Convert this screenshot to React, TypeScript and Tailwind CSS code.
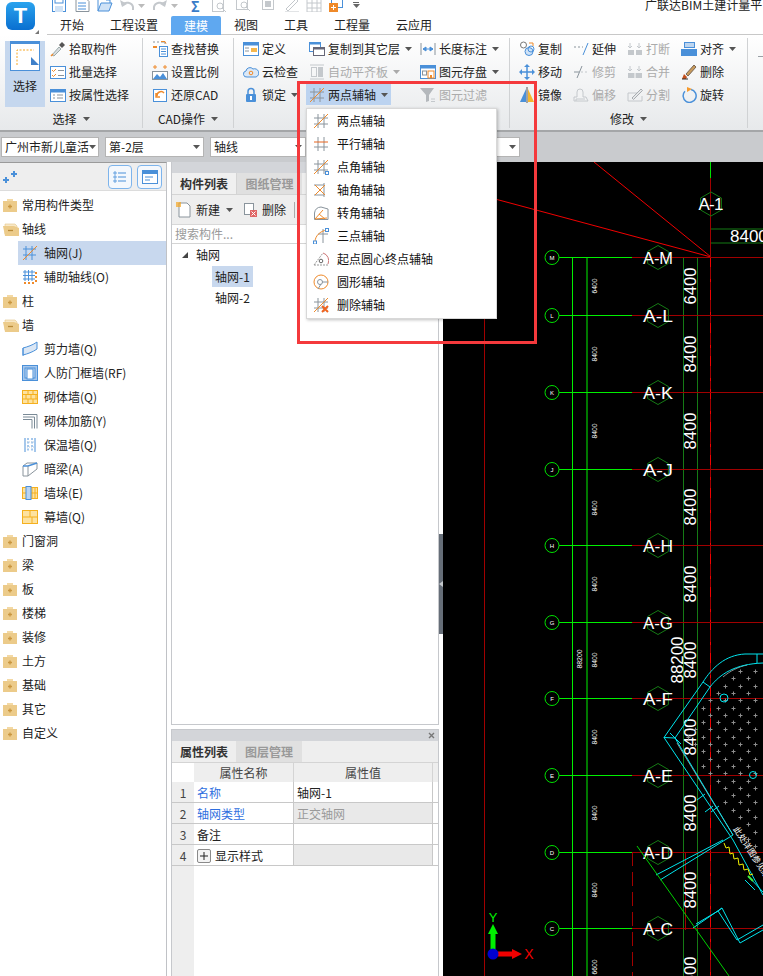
import React from "react";

type P = { children?: React.ReactNode; w?: number; h?: number };
const S = ({ children, w = 16, h = 16 }: P) => (
  <svg width={w} height={h} viewBox="0 0 16 16" fill="none" className="shrink-0">
    {children}
  </svg>
);
const B = "#4a90d9";
const O = "#ef8a2a";
const G = "#8a949c";
const L = "#c4c8cc";

const Caret = ({ c = "#555" }: { c?: string }) => (
  <svg width="7" height="4" viewBox="0 0 7 4" className="shrink-0">
    <path d="M0 0h7L3.500 4z" fill={c} />
  </svg>
);

/* ---------- axis glyphs ---------- */
const Grid = ({ d = true }: { d?: boolean }) => (
  <>
    <path d="M5 1v14M11 1v14M1 5h14M1 11h14" stroke={G} />
    {d && <path d="M1 15L15 1" stroke={O} />}
  </>
);
const MTwo = () => <S><Grid /></S>;
const MPar = () => (
  <S>
    <path d="M5 1v14M11 1v14M1 11h14" stroke={G} />
    <path d="M1 6h14" stroke="#e8641e" />
  </S>
);
const MPtAng = () => (
  <S>
    <Grid />
    <rect x="12.500" y="12.500" width="3" height="3" fill="#fff" stroke={B} />
  </S>
);
const MAxAng = () => (
  <S>
    <path d="M11 1v14M1 3h10M1 13h10" stroke={G} />
    <path d="M2 3l10 10M2 13L12 3" stroke={O} />
  </S>
);
const MTurn = () => (
  <S>
    <path d="M1.500 14.500V8A7 7 0 0 1 8 2l7 2v10.500z" stroke={G} />
    <path d="M2 14L10 5M2 14l12-1M6 9l6 5" stroke={O} />
  </S>
);
const MThree = () => (
  <S>
    <path d="M10 1v14M5 6h10" stroke={G} />
    <path d="M2 14C2 8 7 3 14 2" stroke={O} />
    <rect x="0.500" y="13" width="3" height="3" fill="#fff" stroke={B} />
    <rect x="12.500" y="0.500" width="3" height="3" fill="#fff" stroke={B} />
  </S>
);
const MArc = () => (
  <S>
    <path d="M1 14L10 2" stroke="#999" strokeDasharray="2 1" />
    <path d="M1 14h14" stroke="#999" strokeDasharray="2 1" />
    <path d="M10 2a8 8 0 0 1 5 11" stroke="#c77" />
    <circle cx="8" cy="10" r="1.800" stroke="#666" />
  </S>
);
const MCircle = () => (
  <S>
    <circle cx="8" cy="8" r="7" stroke={O} />
    <circle cx="7" cy="8" r="2.500" stroke={G} />
    <path d="M9 8h6M8 10l-3 5" stroke={G} />
  </S>
);
const MDel = () => (
  <S>
    <Grid />
    <path d="M9 9l6 6M15 9l-6 6" stroke="#f0641e" strokeWidth="2" />
  </S>
);

/* ---------- ribbon icons ---------- */
const IPick = () => (
  <S>
    <path d="M2 14L9 6l2 2-7 7z" fill="#d9dde0" stroke="#9aa" />
    <path d="M9 4l3-3 3 3-3 3z" fill="#555" />
    <path d="M1 15l2-2" stroke={O} strokeWidth="1.500" />
  </S>
);
const IBatch = () => (
  <S>
    <rect x="0.500" y="2.500" width="15" height="12" fill="#fff" stroke={B} />
    <path d="M2 6l1.500 1.500L6 5M2 11l1.500 1.500L6 10" stroke={O} />
    <path d="M8 6.500h6M8 11.500h6" stroke={G} />
  </S>
);
const IAttr = () => (
  <S>
    <rect x="0.500" y="2.500" width="15" height="12" fill="#fff" stroke={B} />
    <rect x="0.500" y="2.500" width="15" height="3" fill={B} />
    <path d="M3 8h2M7 8h6M3 11h2M7 11h6" stroke={G} />
  </S>
);
const IFind = () => (
  <S>
    <path d="M1 1h2M5 1h2M9 1h4v2" stroke={G} />
    <path d="M9 .5h4l1 2" stroke={O} />
    <rect x="1" y="5" width="4" height="2" fill={O} />
    <rect x="7.500" y="5.500" width="8" height="10" fill="#fff" stroke={B} />
    <path d="M9 8h5M9 10.500h5M9 13h5" stroke={B} />
  </S>
);
const IScale = () => (
  <S>
    <path d="M1 3h4M3 1v4M11 3h4M13 1v4" stroke={O} />
    <rect x="0.500" y="7.500" width="15" height="8" fill="#fff" stroke={G} />
    <path d="M1 15l4-5 3 3 3-4 4 6z" fill={B} />
  </S>
);
const IRestore = () => (
  <S>
    <rect x="1.500" y="2.500" width="13" height="12" fill="#fff" stroke={B} />
    <path d="M5 9a4 4 0 0 1 7-3M4 6v4h4" stroke={O} strokeWidth="1.500" />
  </S>
);
const IDefine = () => (
  <S>
    <rect x="0.500" y="1.500" width="15" height="13" fill="#fff" stroke={B} />
    <rect x="0.500" y="1.500" width="15" height="3" fill={B} />
    <path d="M2 7h4M2 10h4" stroke={G} />
    <rect x="8" y="7" width="6" height="4" fill="#f5b74e" />
  </S>
);
const ICloud = () => (
  <S>
    <path d="M4 13a3 3 0 0 1-1-6 4 4 0 0 1 7-2 3.500 3.500 0 0 1 3 8z" fill="#dbe8f6" stroke={B} />
    <circle cx="8" cy="9" r="1.800" stroke={O} />
  </S>
);
const ILock = () => (
  <S>
    <path d="M5 7V4.500a3 3 0 0 1 6 0V7" stroke={B} strokeWidth="1.500" />
    <rect x="3" y="7" width="10" height="8" rx="1" fill={B} />
    <rect x="7" y="9" width="2" height="4" fill="#fff" />
  </S>
);
const ICopyLayer = () => (
  <S>
    <rect x="0.500" y="1.500" width="11" height="9" fill="#fff" stroke={B} />
    <rect x="0.500" y="1.500" width="11" height="2" fill={B} />
    <rect x="4.500" y="6.500" width="11" height="8" fill="#fff" stroke="#667" />
    <rect x="4.500" y="6.500" width="11" height="2" fill="#667" />
  </S>
);
const IAuto = () => (
  <S>
    <path d="M1 1h14M1 15h14" stroke={L} />
    <rect x="2.500" y="3.500" width="5" height="9" stroke={L} />
    <rect x="9" y="3" width="5" height="10" fill={L} />
  </S>
);
const ILength = () => (
  <S>
    <path d="M1 2v12M15 2v12" stroke={G} />
    <path d="M3 8h10M3 8l3-2v4zM13 8l-3-2v4z" stroke={B} fill={B} />
  </S>
);
const IStore = () => (
  <S>
    <rect x="0.500" y="1.500" width="15" height="13" fill="#fff" stroke={B} />
    <rect x="0.500" y="1.500" width="15" height="3" fill={B} />
    <rect x="2.500" y="7" width="4" height="4" stroke={G} />
    <rect x="8" y="7" width="6" height="7" fill="#fff" stroke={O} />
    <rect x="10" y="11" width="2" height="3" fill={O} />
  </S>
);
const IFilter = () => (
  <S>
    <path d="M0 1h14L9 8v6l-3 1V8z" fill="#b4b8bc" />
    <path d="M11 12h4M11 14.500h4" stroke={L} />
  </S>
);
const ICopy = () => (
  <S>
    <circle cx="4.500" cy="4" r="3" fill="#fff" stroke="#777" />
    <circle cx="10" cy="10.500" r="4" fill="#cfe2f6" stroke={B} />
    <circle cx="12" cy="8" r="3" fill="none" stroke={B} />
    <path d="M10 2h4v3" stroke={O} />
  </S>
);
const IMove = () => (
  <S>
    <path d="M8 1v14M1 8h14" stroke={B} strokeWidth="1.500" />
    <path d="M8 0l3 3H5zM8 16l3-3H5zM0 8l3-3v6zM16 8l-3-3v6z" fill={B} />
  </S>
);
const IMirror = () => (
  <S>
    <path d="M7 2v13H1z" fill={B} />
    <path d="M9 2v13h6z" fill="#f5b52e" />
    <path d="M8 0v16" stroke="#555" />
  </S>
);
const IExtend = () => (
  <S>
    <path d="M1 6h9" stroke={G} strokeDasharray="2 2" />
    <path d="M15 2L10 14" stroke={B} />
  </S>
);
const ITrim = () => (
  <S>
    <path d="M8 8h7" stroke={L} strokeDasharray="2 2" />
    <path d="M1 8h5" stroke={G} />
    <path d="M9 2L4 14" stroke={G} />
  </S>
);
const IOffset = () => (
  <S>
    <path d="M1 14V10h3V5a3 3 0 0 1 6 0v5h3l2 4z" fill="#f2f3f4" stroke={L} />
    <path d="M3 14v-2h9" stroke={L} />
  </S>
);
const IBreak = () => (
  <S>
    <rect x="1" y="9" width="6" height="5" fill={L} />
    <rect x="9" y="9" width="6" height="5" fill={L} />
    <path d="M3 2v5M1 5l2 2 2-2M12 2v5M10 5l2 2 2-2" stroke={L} />
  </S>
);
const IMerge = () => (
  <S>
    <rect x="1" y="9" width="14" height="5" fill={L} />
    <path d="M8 9v5" stroke="#fff" />
    <path d="M3 2v5M1 5l2 2 2-2M12 2v5M10 5l2 2 2-2" stroke={L} />
  </S>
);
const ISplit = () => (
  <S>
    <path d="M1 14V6h9M1 14h14V9" stroke={L} />
    <path d="M5 11L14 2l1.500 1.500-9 9z" fill="#e5e7e9" stroke="#a8acb0" />
  </S>
);
const IAlign = () => (
  <S>
    <rect x="3.500" y="1.500" width="10" height="5" fill="#bcd5f0" stroke={B} />
    <rect x="0" y="8" width="16" height="7" fill={B} />
  </S>
);
const IDelete = () => (
  <S>
    <path d="M5 10l8-9 2 2-8 9z" fill="#c99a5a" stroke="#765" />
    <path d="M3 10l3 3-1 2H1z" fill="#c4501c" />
    <path d="M1 15h6" stroke="#333" />
  </S>
);
const IRotate = () => (
  <S>
    <path d="M10 2.500a6.500 6.500 0 1 1-6 1.800" stroke={B} strokeWidth="1.500" />
    <path d="M6 0l5 2-5 3z" fill="#f59a2e" />
  </S>
);

/* ---------- ribbon ---------- */
type Item = { i: React.ReactNode; t: string; a?: boolean; off?: boolean; hi?: boolean };

const RItem = ({ i, t, a, off, hi }: Item) => (
  <div
    className={
      hi
        ? "h-[21px] my-px -mx-[3px] pl-[3px] flex items-center bg-[#bcd3f0] w-[85px]"
        : "h-[23px] flex items-center"
    }
  >
    {i}
    <span className={off ? "ml-[3px] text-[#ababab] whitespace-nowrap" : "ml-[3px] text-[#222] whitespace-nowrap"}>{t}</span>
    {a && (
      <span className={hi ? "ml-[5px]" : "ml-[5px]"}>
        <Caret c={off ? "#aaa" : "#555"} />
      </span>
    )}
  </div>
);
const Col = ({ w, items }: { w: string; items: Item[] }) => (
  <div className={w + " -mt-px flex flex-col"}>
    {items.map((x) => (
      <RItem key={x.t} {...x} />
    ))}
  </div>
);
const GLabel = ({ t }: { t: string }) => (
  <div className="h-[21px] pt-[3px] flex items-center justify-center gap-[6px] text-[#222]">
    <span>{t}</span>
    <Caret />
  </div>
);

const QA = () => (
  <div className="flex items-start h-[12px] overflow-hidden relative">
    <span className="ml-[52px] -mt-[3px] flex"><S><rect x="0.500" y="0.500" width="13" height="14" stroke={B} fill="#fff" /><rect x="3" y="1" width="8" height="5" stroke={B} /><rect x="3" y="9" width="8" height="6" fill="#cfe2f6" /></S></span>
    <span className="ml-[7px] -mt-[3px] flex"><S><path d="M1 .5h9l4 4v10H1z" fill="#fff" stroke={G} /><path d="M3 6h8M3 9h8M3 12h8" stroke={B} /></S></span>
    <span className="ml-[6px] -mt-[3px] flex"><S><path d="M1 14V1h6l2 2h4v3" stroke={B} /><path d="M1 14L4 6h11l-3 8z" fill="#cfe2f6" stroke={B} /></S></span>
    <span className="ml-[6px] -mt-[3px] flex"><S><path d="M3 8a6 5 0 0 1 11 2v3" stroke={L} strokeWidth="2" /><path d="M1 3l2 7 5-3z" fill={L} /></S></span>
    <span className="ml-[3px] mt-[4px] flex"><Caret c="#bbb" /></span>
    <span className="ml-[7px] -mt-[3px] flex"><S><path d="M13 8A6 5 0 0 0 2 10v3" stroke={L} strokeWidth="2" /><path d="M15 3l-2 7-5-3z" fill={L} /></S></span>
    <span className="ml-[3px] mt-[4px] flex"><Caret c="#bbb" /></span>
    <span className="ml-[13px] -mt-[1px] text-[14px] leading-none font-bold text-[#3a7cc8]">Σ</span>
    <span className="ml-[11px] -mt-[3px] flex"><S><rect x="1.500" y="0.500" width="11" height="14" stroke={L} /><circle cx="9" cy="9" r="3" stroke={L} /><path d="M11 11l4 4" stroke={L} /></S></span>
    <span className="ml-[9px] -mt-[3px] flex"><S><rect x="0.500" y="0.500" width="11" height="12" stroke={L} /><circle cx="8" cy="8" r="3" stroke={L} /><path d="M10 10l4 4" stroke={L} /></S></span>
    <span className="ml-[8px] -mt-[3px] flex"><S><rect x="2.500" y="0.500" width="11" height="12" stroke={L} /><rect x="5" y="4" width="6" height="6" fill={L} /></S></span>
    <span className="ml-[8px] -mt-[3px] flex"><S><path d="M2 12L12 2l2 2L4 14z" stroke={L} /><path d="M1 15h14" stroke={L} /></S></span>
    <span className="ml-[6px] -mt-[3px] flex"><S><path d="M1 1v14h14V1zM6 1v14M11 1v14M1 6h14M1 11h14" stroke={L} /></S></span>
    <span className="ml-[7px] -mt-[3px] flex"><S><rect x="2.500" y="0.500" width="11" height="10" stroke={B} /><rect x="0" y="6" width="9" height="9" fill={O} /><path d="M2 10.500h5M4.500 8v5" stroke="#fff" /></S></span>
    <span className="ml-[8px] mt-[2px] flex flex-col items-center gap-px"><span className="block w-[6px] h-px bg-[#666]" /><Caret c="#666" /></span>
    <span className="absolute left-[645px] -top-[3px] text-[#222] whitespace-nowrap leading-[15px]">广联达BIM土建计量平台</span>
  </div>
);

const Combo = ({ w, t, text = "text-[#222]" }: { w: string; t?: string; text?: string }) => (
  <div className={w + " h-[20px] bg-white border border-[#b4b4b4] flex items-center justify-between pl-[3px] pr-[3px] " + text}>
    <span className="whitespace-nowrap">{t}</span>
    <Caret />
  </div>
);

/* ---------- tree ---------- */
const FolderC = () => (
  <svg width="14" height="13" viewBox="0 0 14 13" className="shrink-0">
    <path d="M4 0h6v2H4z" fill="#f3d9a5" />
    <rect x="0" y="2" width="14" height="11" fill="#eccb8a" />
    <path d="M5 7.500h4M7 5.500v4" stroke="#c9963f" strokeWidth="1.300" />
  </svg>
);
const FolderO = () => (
  <svg width="16" height="13" viewBox="0 0 16 13" className="shrink-0">
    <path d="M2 1h10l2 2v8H2z" fill="#f8e8c6" stroke="#e3c587" strokeWidth="0.600" />
    <path d="M0 3h11l5 2v8H2z" fill="#eccb8a" />
    <path d="M5 7.500h5" stroke="#b98a37" strokeWidth="1.300" />
  </svg>
);

const TAxis = () => (
  <S>
    <path d="M4 1v14M10 1v14M1 4h13M1 10h13" stroke={B} />
    <path d="M1 15L15 1" stroke={O} />
  </S>
);
const TAux = () => (
  <S>
    <path d="M3 1v11M6.500 1v11M10 1v11M1 3h12M1 6.500h12M1 10h12" stroke={B} />
    <path d="M13 4h2M13 8h2M13 12h2M2 14h2M6 14h2M10 14h2" stroke={O} strokeWidth="2" strokeDasharray="2 1" />
  </S>
);
const TShear = () => (
  <S>
    <path d="M1 7c4-1 10-3 14-6v7C11 11 5 13 1 14z" fill="#dbe7f5" stroke={B} />
    <path d="M1 7v8" stroke={B} />
  </S>
);
const TDoor = () => (
  <S>
    <rect x="0.500" y="0.500" width="15" height="15" fill="#a8c8ec" stroke={B} />
    <rect x="3" y="3" width="10" height="10" fill="#cfe0f4" stroke={B} />
    <rect x="5" y="4" width="6" height="10" fill="#fff" stroke={B} />
  </S>
);
const TBrick = () => (
  <S>
    <rect x="0.500" y="1.500" width="15" height="13" fill="#fde2a0" stroke="#f5b01e" />
    <path d="M1 5.500h14M1 10h14M6 2v3.500M11 2v3.500M4 5.500V10M9 5.500V10M14 5.500V10M6 10v4M11 10v4" stroke="#f5b01e" />
  </S>
);
const TRebar = () => (
  <S>
    <path d="M1 1.500h14v14M1 4h11.500v11.500M1 6.500h9v9" stroke="#7a8a96" />
  </S>
);
const TInsul = () => (
  <S>
    <path d="M3 1v14M13 1v14" stroke={B} />
    <path d="M6 1v14M10 1v14" stroke={B} strokeDasharray="2 1.500" />
    <path d="M3 5h10M3 10h10" stroke="#bcd" strokeDasharray="1 1" />
  </S>
);
const TBeam = () => (
  <S>
    <path d="M1 5l4-3h10v6l-9 7H1z" fill="#fff" stroke={G} />
    <path d="M1 5h5l9-3" stroke={B} strokeWidth="1.500" />
    <path d="M6 5v10" stroke={G} />
  </S>
);
const TPier = () => (
  <S>
    <rect x="0.500" y="2.500" width="15" height="11" fill="#fde2a0" stroke="#f5b01e" />
    <path d="M1 8h14M10 3v10M13 3v10" stroke="#f5b01e" />
    <rect x="4" y="1.500" width="5" height="13" fill="#b9d4f2" stroke={B} />
  </S>
);
const TCurtain = () => (
  <S>
    <rect x="0.500" y="1.500" width="15" height="13" fill="#fde2a0" stroke="#f5b01e" />
    <path d="M8 2v6M1 8h14M10 8v6" stroke="#f5b01e" />
  </S>
);

type TR = { t: string; k: "c" | "o" | "i"; i?: React.ReactNode; sel?: boolean };
const tree: TR[] = [
  { t: "常用构件类型", k: "c" },
  { t: "轴线", k: "o" },
  { t: "轴网(J)", k: "i", i: <TAxis />, sel: true },
  { t: "辅助轴线(O)", k: "i", i: <TAux /> },
  { t: "柱", k: "c" },
  { t: "墙", k: "o" },
  { t: "剪力墙(Q)", k: "i", i: <TShear /> },
  { t: "人防门框墙(RF)", k: "i", i: <TDoor /> },
  { t: "砌体墙(Q)", k: "i", i: <TBrick /> },
  { t: "砌体加筋(Y)", k: "i", i: <TRebar /> },
  { t: "保温墙(Q)", k: "i", i: <TInsul /> },
  { t: "暗梁(A)", k: "i", i: <TBeam /> },
  { t: "墙垛(E)", k: "i", i: <TPier /> },
  { t: "幕墙(Q)", k: "i", i: <TCurtain /> },
  { t: "门窗洞", k: "c" },
  { t: "梁", k: "c" },
  { t: "板", k: "c" },
  { t: "楼梯", k: "c" },
  { t: "装修", k: "c" },
  { t: "土方", k: "c" },
  { t: "基础", k: "c" },
  { t: "其它", k: "c" },
  { t: "自定义", k: "c" },
];

const menu: [React.ReactNode, string][] = [
  [<MTwo />, "两点辅轴"],
  [<MPar />, "平行辅轴"],
  [<MPtAng />, "点角辅轴"],
  [<MAxAng />, "轴角辅轴"],
  [<MTurn />, "转角辅轴"],
  [<MThree />, "三点辅轴"],
  [<MArc />, "起点圆心终点辅轴"],
  [<MCircle />, "圆形辅轴"],
  [<MDel />, "删除辅轴"],
];

/* ---------- CAD canvas drawing ---------- */
const rows: [string, number][] = [
  ["A-M", 257.5],
  ["A-L", 315.5],
  ["A-K", 392.5],
  ["A-J", 469.5],
  ["A-H", 545.5],
  ["A-G", 622.5],
  ["A-F", 698.5],
  ["A-E", 775.5],
  ["A-D", 852.5],
  ["A-C", 928.5],
];
const hex = (cx: number, cy: number, r: number) =>
  [0, 1, 2, 3, 4, 5]
    .map((i) => {
      const a = (Math.PI / 3) * i - Math.PI / 2;
      return `${(cx + r * Math.cos(a)).toFixed(1)},${(cy + r * Math.sin(a)).toFixed(1)}`;
    })
    .join(" ");

const inside = (x: number, y: number) => {
  if (y < 668) return false;
  if (y < 700) return x > 700 + ((700 - y) * 35) / 32 + 4;
  if (y < 743) return x > 700 - ((y - 700) * 20) / 43 + 4;
  return x > 680 + (y - 743) * 0.62 + 6;
};
const plusses: [number, number][] = [];
for (let j = 0; j < 30; j++) {
  const y = Math.round(671 + j * 7.3) + 0.5;
  for (let i = 0; i < 14; i++) {
    const x = Math.round(665 + i * 15 + (j % 2 ? 7.5 : 0)) + 0.5;
    if (x < 763 && inside(x, y)) plusses.push([x, y]);
  }
}

const vt = (x: number, y: number, t: string, fs: number, len: number) => (
  <text
    key={t + y + x}
    transform={`translate(${x} ${y}) rotate(-90)`}
    fill="#fff"
    fontSize={fs}
    textAnchor="middle"
    fontFamily="'Liberation Sans', sans-serif"
    textLength={len}
    lengthAdjust="spacingAndGlyphs"
  >
    {t}
  </text>
);

const Canvas = () => (
  <svg width="320" height="814" viewBox="443 162 320 814" className="block shrink-0 bg-black">
    <path d="M484.500 162V976" stroke="#a00000" />
    <path d="M594 162L711 257M443 185L711 257" stroke="#f00000" />
    <path d="M572.500 257V976M587 257V976" stroke="#00f000" />
    <path d="M683.500 257V976M697.500 257V976" stroke="#157a15" />
    <path d="M710.500 162V178" stroke="#00e000" />
    <path d="M711 229H763M711 243H763" stroke="#157a15" />
    <path d="M710.500 178V976" stroke="#a00000" />
    <path d="M710.500 257V976" stroke="#f00000" strokeDasharray="10 12 3 8" />
    <path d="M632.500 852V976" stroke="#a00000" strokeDasharray="14 6" />
    <path d="M685.500 852V930" stroke="#a00000" />
    {rows.map(([t, y]) => (
      <g key={t}>
        <path d={`M632 ${y}H763`} stroke="#a00000" />
        <path d={`M559 ${y}H632`} stroke="#00f000" />
        <circle cx="552" cy={y} r="7" fill="#000" stroke="#00e000" />
        <text x="552" y={y + 2} fill="#fff" fontSize="6" textAnchor="middle" fontFamily="'Liberation Sans', sans-serif">
          {t.slice(2)}
        </text>
        <polygon points={hex(658, y, 12)} stroke="#157a15" fill="none" />
        <text x="658" y={y + 6} fill="#fff" fontSize="17" textAnchor="middle" fontFamily="'Liberation Sans', sans-serif" textLength="30" lengthAdjust="spacingAndGlyphs">
          {t}
        </text>
      </g>
    ))}
    <polygon points={hex(711, 204, 12)} stroke="#157a15" fill="none" />
    <text x="711" y="210" fill="#fff" fontSize="17" textAnchor="middle" fontFamily="'Liberation Sans', sans-serif" textLength="25" lengthAdjust="spacing">A-1</text>
    <text x="730" y="242" fill="#fff" fontSize="17" fontFamily="'Liberation Sans', sans-serif">8400</text>
    {vt(696, 286, "6400", 17, 37)}
    {[354, 431, 507, 584, 660, 737, 813, 890].map((y) => vt(696, y, "8400", 17, 37))}
    {vt(683, 660, "88200", 17, 47)}
    {vt(696, 975, "6600", 17, 37)}
    {[286, 354, 431, 508, 584, 660, 737, 813, 890].map((y, i) => vt(597, y, i ? "8400" : "6400", 8, 15))}
    {vt(597, 967, "6600", 8, 15)}
    {vt(582, 659, "88200", 8, 19)}

    {plusses.map(([x, y]) => (
      <path key={x + "-" + y} d={`M${x - 2} ${y}h4M${x} ${y - 2}v4`} stroke="#8e8e8e" />
    ))}
    <path d="M677 743L733 835M723 677C730 671 738 667 747 665" stroke="#8c8c8c" />
    <g stroke="#00e5ee" fill="none">
      <path d="M763 654H745C725 655 712 668 703 682L664 737.500L675 738L710 687C720 674 735 664 763 663" />
      <path d="M664 737.500L733 840L763 895M675 738L733 835M670 733L681 744" />
      <path d="M703 682l7 5M757 654v9" />
      <path d="M697 800l8 -6M705 812l8 -6M711 812l8-6" />
      <path d="M656 875L723 840M660 880L733 835" />
      <path d="M693 928L722 908L740 943L763 930M696 924L718 911L737 940L763 925M718 911L722 908" />
      <circle cx="724" cy="698" r="4" />
      <circle cx="753" cy="775" r="3.500" />
      <path d="M750 878l13 14M745 880l10 10" />
    </g>
    <path d="M637 846L729 976" stroke="#00d000" />
    <path d="M724 843l2 5 3-1 1 7 3-1 1 6 4-1 1 7 4-1 1 6 4-1 2 6 3-1" stroke="#f0f000" fill="none" />
    <path d="M748 876l5 5" stroke="#40f040" strokeWidth="2" />
    <text transform="translate(733 829) rotate(57)" fill="#fff" fontSize="8.500" fontFamily="'Noto Sans CJK SC', sans-serif">
      此处详图参见结构施工图
    </text>
    {/* UCS */}
    <path d="M493 950V931" stroke="#00f000" strokeWidth="5" />
    <path d="M493 924l5 10h-10z" fill="#00f000" />
    <path d="M498 954H516" stroke="#f00000" strokeWidth="5" />
    <path d="M522 954l-10-5v10z" fill="#f00000" />
    <circle cx="493" cy="954" r="5.500" fill="#0000d0" />
    <text x="493" y="922" textAnchor="middle" fill="#00f000" fontSize="13" fontFamily="'Liberation Sans', sans-serif">Y</text>
    <text x="529" y="959" textAnchor="middle" fill="#f00000" fontSize="14" fontFamily="'Liberation Sans', sans-serif">X</text>
  </svg>
);

export default function App() {
  return (
    <div className="relative w-[763px] h-[976px] overflow-hidden bg-white text-[12px] leading-none text-[#222] font-['Noto_Sans_CJK_SC','Liberation_Sans',sans-serif]">
      {/* top: logo + quick access + tabs */}
      <div className="relative h-[35px] bg-white">
        <QA />
        <div className="absolute left-[6px] top-[2px] w-[29px] h-[28px] rounded-[6px] bg-linear-to-b from-[#2aa3ee] to-[#0a6fd0] flex items-center justify-center text-white text-[22px] font-bold font-['Liberation_Sans',sans-serif]">
          T
        </div>
        <svg width="4" height="4" viewBox="0 0 4 4" className="absolute left-[35px] top-[30px]"><path d="M4 0v4H0z" fill="#777" /></svg>
        <div className="ml-[47px] mt-[4px] h-[19px] flex border-b border-[#c8c8c8]">
          {["开始", "工程设置", "建模", "视图", "工具", "工程量", "云应用"].map((t) => (
            <div
              key={t}
              className={
                t === "建模"
                  ? "px-[13px] h-[19px] flex items-center rounded-t-[2px] bg-[#5fa8f0] text-white"
                  : "px-[13px] h-[18px] flex items-center text-[#222]"
              }
            >
              {t}
            </div>
          ))}
          <div className="flex-1" />
        </div>
      </div>

      {/* ribbon */}
      <div className="h-[97px] flex bg-linear-to-b from-white to-[#e7e9eb] border-b-2 border-[#a4a6a8]">
        <div className="w-[143px] h-[90px] mt-[3px] border-r border-[#d0d2d4] flex flex-col">
          <div className="h-[69px] flex items-start">
            <div className="ml-[5px] mt-[3px] w-[40px] h-[66px] bg-[#c5d7ee] flex flex-col items-center">
              <svg width="30" height="30" viewBox="0 0 30 30" className="shrink-0">
                <rect x="0.500" y="0.500" width="29" height="29" fill="#fff" stroke="#4a90d9" />
                <rect x="0" y="0" width="30" height="3" fill="#4a90d9" />
                <path d="M7 24V9h17" stroke="#f5a623" strokeDasharray="2 1.500" fill="none" />
                <path d="M21 16l8 8h-8z" fill="#3f80c9" />
              </svg>
              <span className="mt-[9px]">选择</span>
            </div>
            <div className="ml-[5px] -mt-px flex flex-col">
              {[
                { i: <IPick />, t: "拾取构件" },
                { i: <IBatch />, t: "批量选择" },
                { i: <IAttr />, t: "按属性选择" },
              ].map((x) => (
                <RItem key={x.t} {...x} />
              ))}
            </div>
          </div>
          <GLabel t="选择" />
        </div>

        <div className="w-[91px] h-[90px] mt-[3px] border-r border-[#d0d2d4] flex flex-col">
          <div className="h-[69px] pl-[9px]">
            <Col w="w-full" items={[{ i: <IFind />, t: "查找替换" }, { i: <IScale />, t: "设置比例" }, { i: <IRestore />, t: "还原CAD" }]} />
          </div>
          <GLabel t="CAD操作" />
        </div>

        <div className="w-[276px] h-[90px] mt-[3px] border-r border-[#d0d2d4] flex flex-col">
          <div className="h-[69px] pl-[9px] flex">
            <Col w="w-[66px]" items={[{ i: <IDefine />, t: "定义" }, { i: <ICloud />, t: "云检查" }, { i: <ILock />, t: "锁定", a: true }]} />
            <Col w="w-[111px]" items={[{ i: <ICopyLayer />, t: "复制到其它层", a: true }, { i: <IAuto />, t: "自动平齐板", a: true, off: true }, { i: <MTwo />, t: "两点辅轴", a: true, hi: true }]} />
            <Col w="w-[85px]" items={[{ i: <ILength />, t: "长度标注", a: true }, { i: <IStore />, t: "图元存盘", a: true }, { i: <IFilter />, t: "图元过滤", off: true }]} />
          </div>
        </div>

        <div className="w-[238px] h-[90px] mt-[3px] border-r border-[#d0d2d4] flex flex-col">
          <div className="h-[69px] pl-[9px] flex">
            <Col w="w-[54px]" items={[{ i: <ICopy />, t: "复制" }, { i: <IMove />, t: "移动" }, { i: <IMirror />, t: "镜像" }]} />
            <Col w="w-[54px]" items={[{ i: <IExtend />, t: "延伸" }, { i: <ITrim />, t: "修剪", off: true }, { i: <IOffset />, t: "偏移", off: true }]} />
            <Col w="w-[54px]" items={[{ i: <IBreak />, t: "打断", off: true }, { i: <IMerge />, t: "合并", off: true }, { i: <ISplit />, t: "分割", off: true }]} />
            <Col w="w-[60px]" items={[{ i: <IAlign />, t: "对齐", a: true }, { i: <IDelete />, t: "删除" }, { i: <IRotate />, t: "旋转" }]} />
          </div>
          <GLabel t="修改" />
        </div>
        <div className="flex-1 pl-[10px] pt-[21px]">
          <div className="h-px bg-[#9aa0a6]" />
        </div>
      </div>

      {/* combos */}
      <div className="h-[30px] bg-[#c9cbce] flex items-center pl-px gap-[6px]">
        <Combo w="w-[98px]" t="广州市新儿童活" />
        <Combo w="w-[99px]" t="第-2层" />
        <Combo w="w-[96px]" t="轴线" />
        <Combo w="w-[208px]" />
      </div>

      {/* main */}
      <div className="h-[814px] flex">
        {/* left tree */}
        <div className="w-[167px] border-r border-[#c0c2c6] border-t border-t-[#9a9a9a]">
          <div className="h-[28px] bg-[#eeeeee] flex items-center pl-[3px] pr-[4px] border-b border-[#dcdcdc]">
            <svg width="14" height="12" viewBox="0 0 14 12" className="shrink-0">
              <path d="M0 9h6M3 6v6M8 3h6M11 0v6" stroke={B} strokeWidth="2" />
            </svg>
            <div className="flex-1" />
            <div className="w-[24px] h-[24px] rounded-[4px] border border-[#7db4ec] bg-[#f4f8fd] flex items-center justify-center">
              <S><path d="M2 3h2v2H2zM2 7h2v2H2zM2 11h2v2H2z" stroke={B} strokeWidth="0.800" /><path d="M6 4h8M6 8h8M6 12h8" stroke={B} /></S>
            </div>
            <div className="ml-[5px] w-[25px] h-[24px] rounded-[4px] border border-[#7db4ec] bg-[#f4f8fd] flex items-center justify-center">
              <S><rect x="0.500" y="1.500" width="15" height="13" stroke={B} fill="#fff" /><rect x="0.500" y="1.500" width="15" height="3.500" fill={B} /><path d="M3 8h8M3 11h5" stroke={B} /></S>
            </div>
          </div>
          <div className="pt-[2px]">
            {tree.map((r) =>
              r.k === "i" ? (
                <div key={r.t} className={r.sel ? "h-[24px] ml-[18px] pl-[4px] flex items-center bg-[#c8d8ee]" : "h-[24px] ml-[18px] pl-[4px] flex items-center"}>
                  {r.i}
                  <span className="ml-[6px] whitespace-nowrap">{r.t}</span>
                </div>
              ) : (
                <div key={r.t} className="h-[24px] flex items-center pl-[3px]">
                  {r.k === "c" ? <FolderC /> : <FolderO />}
                  <span className={r.k === "c" ? "ml-[5px] whitespace-nowrap" : "ml-[3px] whitespace-nowrap"}>{r.t}</span>
                </div>
              )
            )}
          </div>
        </div>

        {/* middle column */}
        <div className="ml-[4px] w-[268px] flex flex-col gap-[4px] bg-white">
          <div className="h-[563px] border border-t-0 border-[#c6c8cc] flex flex-col">
            <div className="h-[11px] bg-[#d3d5d9]" />
            <div className="h-[22px] bg-[#eeeeee] flex border-b border-[#d4d4d4]">
              <div className="w-[64px] flex items-center justify-center font-bold text-[#333] bg-[#f0f0f0]">构件列表</div>
              <div className="w-[66px] flex items-center justify-center font-bold text-[#999] bg-[#e0e0e0] border-l border-[#d4d4d4]">图纸管理</div>
            </div>
            <div className="h-[30px] bg-[#eeeeee] flex items-center pl-[4px] border-b border-[#d8d8d8]">
              <S><path d="M3 1h8l3 3v11H3z" fill="#fff" stroke={G} /><path d="M0 0h5v5H0z" fill="#f5a623" fillOpacity="0.700" /></S>
              <span className="ml-[4px]">新建</span>
              <span className="ml-[6px]"><Caret /></span>
              <span className="ml-[10px] flex"><S><rect x="1.500" y="1.500" width="9" height="11" fill="#fff" stroke={G} /><rect x="7" y="8" width="7" height="7" fill="#e06666" /><path d="M8.500 9.500l4 4M12.500 9.500l-4 4" stroke="#fff" /></S></span>
              <span className="ml-[3px]">删除</span>
              <span className="ml-[8px] h-[16px] w-px bg-[#aaa]" />
            </div>
            <div className="h-[19px] flex items-center pl-[3px] text-[#9a9a9a] border-b border-[#d4d4d4]">搜索构件...</div>
            <div>
              <div className="h-[21px] flex items-center pl-[10px]">
                <svg width="6" height="6" viewBox="0 0 6 6" className="shrink-0"><path d="M6 0v6H0z" fill="#444" /></svg>
                <span className="ml-[8px]">轴网</span>
              </div>
              <div className="h-[21px] mt-px flex items-center pl-[40px]"><span className="h-[21px] px-[3px] flex items-center bg-[#c8d8ee]">轴网-1</span></div>
              <div className="h-[21px] flex items-center pl-[40px]"><span className="px-[3px]">轴网-2</span></div>
            </div>
          </div>

          <div className="flex-1 border-x border-[#c6c8cc] border-t flex flex-col">
            <div className="h-[11px] bg-[#d3d5d9] flex items-center justify-end pr-[3px]">
              <svg width="7" height="7" viewBox="0 0 7 7"><path d="M1 1l5 5M6 1L1 6" stroke="#777" strokeWidth="1.400" /></svg>
            </div>
            <div className="h-[22px] bg-[#eeeeee] flex border-b border-[#d4d4d4]">
              <div className="w-[64px] flex items-center justify-center font-bold text-[#333]">属性列表</div>
              <div className="w-[66px] flex items-center justify-center font-bold text-[#999] bg-[#e0e0e0]">图层管理</div>
            </div>
            <div className="flex flex-col flex-1">
              <div className="h-[19px] flex">
                <div className="w-[22px] bg-white" />
                <div className="w-[100px] bg-[#eeeeee] flex items-center justify-center text-[#444] border-r border-[#d4d4d4]">属性名称</div>
                <div className="w-[139px] bg-[#eeeeee] flex items-center justify-center text-[#444] border-r border-[#d4d4d4]">属性值</div>
                <div className="flex-1 bg-[#eeeeee]" />
              </div>
              {[
                { n: "1", k: "名称", v: "轴网-1", blue: true, gray: false },
                { n: "2", k: "轴网类型", v: "正交轴网", blue: true, gray: true },
                { n: "3", k: "备注", v: "", blue: false, gray: false },
                { n: "4", k: "显示样式", v: "", blue: false, gray: true, plus: true },
              ].map((r) => (
                <div key={r.n} className="h-[21px] flex border-b border-[#c8c8c8]">
                  <div className="w-[22px] bg-[#eeeeee] flex items-center justify-center pt-px text-[#444]">{r.n}</div>
                  <div className={"w-[100px] flex items-center pl-[3px] pt-px border-r border-[#c8c8c8] bg-white " + (r.blue ? "text-[#2f6fe0]" : "text-[#222]")}>
                    {r.plus && (
                      <span className="mr-[4px] w-[14px] h-[14px] border border-[#8a8a8a] rounded-[2px] bg-[#f4f4f4] flex items-center justify-center">
                        <svg width="8" height="8" viewBox="0 0 8 8"><path d="M0 4h8M4 0v8" stroke="#222" /></svg>
                      </span>
                    )}
                    {r.k}
                  </div>
                  <div className={"w-[139px] flex items-center pl-[3px] pt-px border-r border-[#c8c8c8] " + (r.gray ? "bg-[#e9e9e9] text-[#9a9a9a]" : "bg-white")}>{r.v}</div>
                  <div className="flex-1 bg-white" />
                </div>
              ))}
              <div className="flex-1 flex">
                <div className="w-[22px] bg-[#eeeeee]" />
                <div className="flex-1 bg-white" />
              </div>
            </div>
          </div>
        </div>
        <div className="w-[4px] bg-white" />
        <Canvas />
      </div>

      {/* splitter handle */}
      <div className="absolute left-[439px] top-[534px] w-[4px] h-[100px] bg-[#666e78] flex items-center justify-center">
        <svg width="4" height="6" viewBox="0 0 4 6"><path d="M4 0v6L0 3z" fill="#c4c8cc" /></svg>
      </div>

      {/* dropdown menu */}
      <div className="absolute left-[306px] top-[108px] w-[191px] h-[211px] bg-white border border-[#d8d8d8] shadow-[1px_1px_3px_rgba(0,0,0,0.25)]">
        {menu.map(([i, t]) => (
          <div key={t} className="h-[23px] flex items-center pl-[6px]">
            {i}
            <span className="ml-[8px] whitespace-nowrap text-[#111]">{t}</span>
          </div>
        ))}
      </div>

      {/* red annotation frame */}
      <div className="absolute left-[297px] top-[81px] w-[240px] h-[263px] border-[3px] border-[#f4393c] pointer-events-none" />
    </div>
  );
}
